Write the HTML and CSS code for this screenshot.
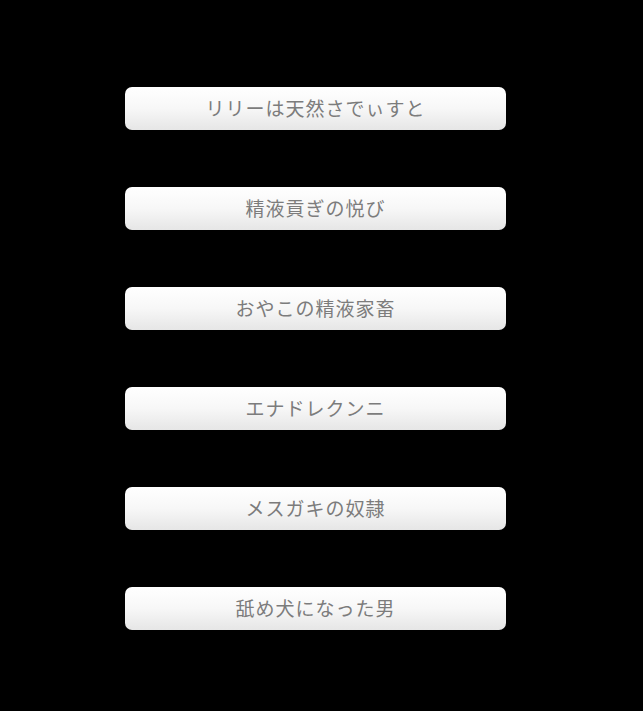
FILE: index.html
```html
<!DOCTYPE html>
<html lang="ja">
<head>
<meta charset="utf-8">
<link rel="stylesheet" href="styles.css">
</head>
<body>
<div class="menu">
  <button class="item">リリーは天然さでぃすと</button>
  <button class="item">精液貢ぎの悦び</button>
  <button class="item">おやこの精液家畜</button>
  <button class="item">エナドレクンニ</button>
  <button class="item">メスガキの奴隷</button>
  <button class="item">舐め犬になった男</button>
</div>
</body>
</html>
```
FILE: styles.css
```css
html, body {
  margin: 0;
  padding: 0;
  background: #000;
  height: 100%;
}
.menu {
  display: flex;
  flex-direction: column;
  gap: 57px;
  padding-top: 87px;
  padding-left: 125px;
  width: 381px;
}
.item {
  width: 381px;
  height: 43px;
  border: none;
  border-radius: 7px;
  background: linear-gradient(to bottom, #ffffff 0%, #f7f7f7 50%, #e6e6e6 100%);
  color: #7c7c7c;
  font-family: "Noto Sans CJK JP", "Noto Sans", sans-serif;
  font-size: 19px;
  font-weight: 400;
  letter-spacing: 1px;
  padding: 0 0 2px 0;
  margin: 0;
  text-align: center;
  line-height: 39px;
}
```
